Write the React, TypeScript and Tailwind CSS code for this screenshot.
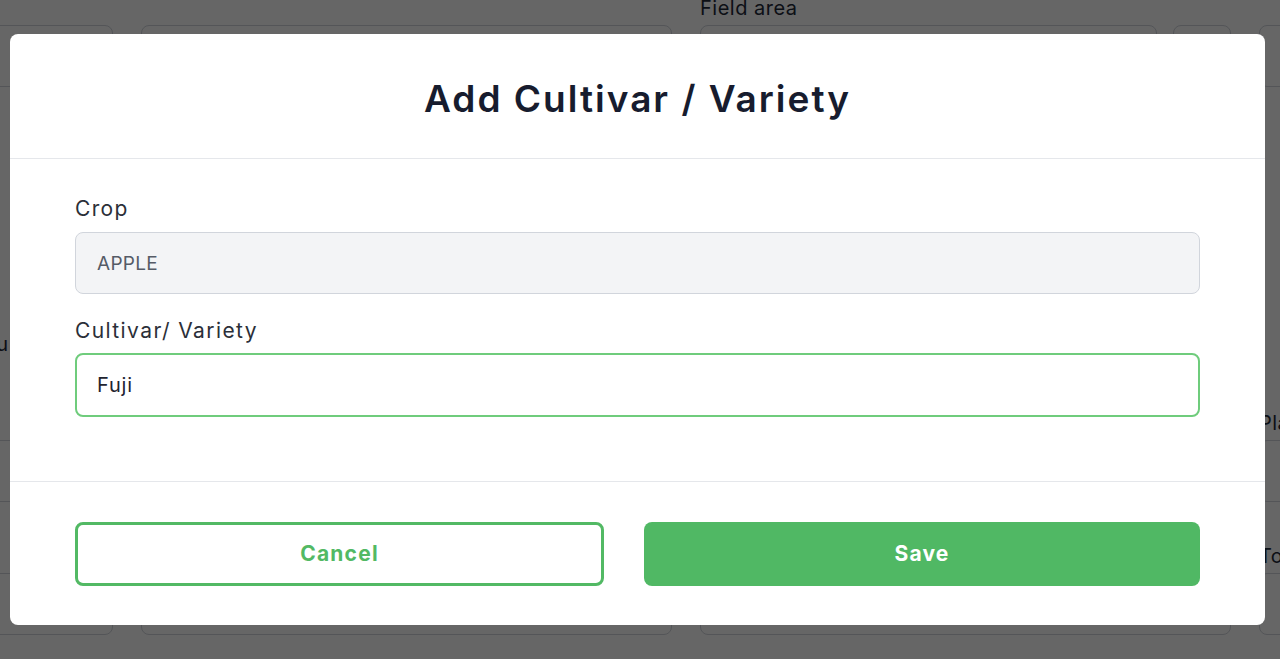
import { useState } from "react";

const font = { fontFamily: "Inter, 'Noto Sans', sans-serif" };

function BgBox({ className = "" }: { className?: string }) {
  return <div className={`h-[62px] rounded-lg border border-gray-300 bg-white ${className}`} />;
}

function BgField({ label, split, className = "" }: { label?: string; split?: boolean; className?: string }) {
  return (
    <div className={`flex flex-col ${className}`}>
      <span className="h-[22px] text-[20px] leading-[22px] tracking-[0.5px] text-gray-800">{label}</span>
      {split ? (
        <div className="mt-[6px] flex gap-[16px]">
          <BgBox className="flex-1" />
          <BgBox className="w-[58px]" />
        </div>
      ) : (
        <BgBox className="mt-[6px]" />
      )}
    </div>
  );
}

function BackgroundPage() {
  // columns of the form that sits behind the modal
  const cols = [
    { w: "w-[300px] -ml-[187px]", labels: ["", "", ""], extra: "Menu" },
    { w: "w-[531px]", labels: ["", "", ""] },
    { w: "w-[531px]", labels: ["Field area", "", ""], split: true },
    { w: "w-[531px]", labels: ["", "Planting date", "Total plants"] },
  ];
  return (
    <div className="h-[659px] w-[1280px] overflow-hidden bg-white" style={font}>
      <div className="flex gap-[28px]">
        {cols.map((c, i) => (
          <div key={i} className={`flex shrink-0 flex-col ${c.w}`}>
            <BgField label={c.labels[0]} split={c.split} className="-mt-[3px]" />
            <div className="h-[305px]">
              {c.extra && (
                <p className="mt-[246px] pr-[105px] text-right text-[20px] leading-[22px] text-gray-800">{c.extra}</p>
              )}
            </div>
            <BgField label={c.labels[1]} className="mt-[20px]" />
            <BgField label={c.labels[2]} className="mt-[43px]" />
          </div>
        ))}
      </div>
    </div>
  );
}

export default function App() {
  const [variety, setVariety] = useState("Fuji");

  return (
    <div className="relative h-[659px] w-[1280px] overflow-hidden">
      <BackgroundPage />

      {/* Overlay + modal */}
      <div className="fixed inset-0 flex items-center bg-black/60" style={font}>
        <div className="ml-[10px] flex h-[591px] w-[1255px] flex-col rounded-lg bg-white">
          <div className="flex h-[125px] items-center justify-center border-b border-gray-200 pt-[6px]">
            <h2 className="text-[37px] font-semibold tracking-[2px] text-[#171c2e]">
              Add Cultivar / Variety
            </h2>
          </div>

          <div className="flex h-[322px] flex-col px-[65px] pt-[36px]">
            <label className="text-[21px] leading-[28px] tracking-[1.3px] text-[#2b2f38]">Crop</label>
            <input
              disabled
              value="APPLE"
              className="mt-[9px] h-[62px] w-full rounded-lg border border-gray-300 bg-[#f3f4f6] px-[21px] text-[19px] tracking-[0.3px] text-[#555b66] outline-none"
            />
            <label className="mt-[23px] text-[21px] leading-[28px] tracking-[1.4px] text-[#2b2f38]">
              Cultivar/ Variety
            </label>
            <input
              value={variety}
              onChange={(e) => setVariety(e.target.value)}
              className="mt-[8px] h-[64px] w-full rounded-lg border-2 border-[#6fcc7c] bg-white px-[20px] text-[20px] tracking-[0.8px] text-[#1f2430] outline-none"
            />
          </div>

          <div className="flex gap-[40px] border-t border-gray-200 px-[65px] pt-[40px]">
            <button className="h-[64px] w-[529px] rounded-lg border-[3px] border-[#52b964] bg-white text-[21px] font-bold tracking-[1.2px] text-[#52b964]">
              Cancel
            </button>
            <button className="h-[64px] flex-1 rounded-lg bg-[#50b864] text-[21px] font-bold tracking-[1.2px] text-white">
              Save
            </button>
          </div>
        </div>
      </div>
    </div>
  );
}
